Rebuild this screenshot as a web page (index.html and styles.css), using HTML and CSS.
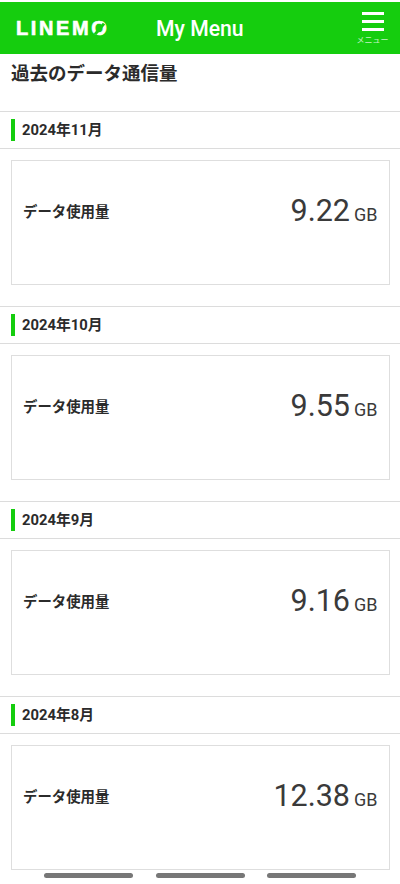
FILE: index.html
```html
<!DOCTYPE html>
<html>
<head>
  <title>My Menu</title>
  <link rel="stylesheet" href="styles.css">
</head>
<body>
  <div class="header">
    <div class="logo">LINEM<span class="logo-o">O</span></div>
    <div class="header-title">My Menu</div>
    <div class="menu">
      <div class="menu-icon"><span></span><span></span><span></span></div>
      <div class="menu-label">メニュー</div>
    </div>
  </div>

  <h1 class="title">過去のデータ通信量</h1>

  <div class="month"><span class="month-name">2024年11月</span></div>
  <div class="card">
    <div class="label">データ使用量</div>
    <div class="usage"><span class="amount">9.22</span><span class="unit">GB</span></div>
  </div>

  <div class="month"><span class="month-name">2024年10月</span></div>
  <div class="card">
    <div class="label">データ使用量</div>
    <div class="usage"><span class="amount">9.55</span><span class="unit">GB</span></div>
  </div>

  <div class="month"><span class="month-name">2024年9月</span></div>
  <div class="card">
    <div class="label">データ使用量</div>
    <div class="usage"><span class="amount">9.16</span><span class="unit">GB</span></div>
  </div>

  <div class="month"><span class="month-name">2024年8月</span></div>
  <div class="card">
    <div class="label">データ使用量</div>
    <div class="usage"><span class="amount">12.38</span><span class="unit">GB</span></div>
  </div>

  <div class="tabs">
    <span class="tab"></span>
    <span class="tab"></span>
    <span class="tab"></span>
  </div>
</body>
</html>
```

FILE: styles.css
```css
html {
  height: 100%;
  overflow: hidden;
}

body {
  margin: 0;
  padding-top: 2px;
  height: 882px;
  overflow: hidden;
  position: relative;
  font-family: Roboto, "Noto Sans CJK JP", sans-serif;
  background-color: #fff;
  color: #2b2b2b;
}

.header {
  display: flex;
  align-items: center;
  height: 52px;
  padding: 0 11px 0 16px;
  background-color: #15cd0e;
  color: #fff;
}

.logo {
  width: 140px;
  font-family: "Liberation Sans", sans-serif;
  font-size: 20px;
  font-weight: 700;
  letter-spacing: 2.6px;
  -webkit-text-stroke: 0.6px #fff;
}

.logo-o {
  position: relative;
  display: inline-block;
}

.logo-o::after {
  content: "";
  position: absolute;
  left: 7px;
  top: 5px;
  width: 3px;
  height: 14px;
  background-color: #15cd0e;
  transform: rotate(40deg);
}

.header-title {
  flex: 1;
  font-size: 21.2px;
  font-weight: 500;
}

.menu {
  display: flex;
  flex-direction: column;
  align-items: center;
  width: 33px;
  padding-top: 3px;
}

.menu-icon {
  display: flex;
  flex-direction: column;
  gap: 5px;
  width: 22px;
}

.menu-icon span {
  height: 3px;
  background-color: #fff;
}

.menu-label {
  margin-top: 4px;
  font-size: 8px;
  line-height: 12px;
  white-space: nowrap;
  opacity: 0.75;
}

.title {
  margin: 0;
  height: 57px;
  padding: 7px 11px 0;
  box-sizing: border-box;
  font-size: 18.5px;
  line-height: 26px;
  font-weight: 700;
}

.month {
  display: flex;
  align-items: center;
  height: 36px;
  padding: 0 11px;
  border-top: 1px solid #dcdcdc;
  border-bottom: 1px solid #dcdcdc;
}

.month-name {
  height: 22px;
  line-height: 22px;
  padding-left: 7px;
  border-left: 4px solid #15cd0e;
  font-size: 14.8px;
  font-weight: 700;
}

.card {
  display: flex;
  justify-content: space-between;
  align-items: flex-start;
  height: 123px;
  margin: 11px 10.5px 21px 11px;
  padding: 0 11px;
  border: 1px solid #dedede;
}

.label {
  margin-top: 42px;
  font-size: 14.4px;
  line-height: 20px;
  font-weight: 700;
}

.usage {
  margin-top: 30px;
  line-height: 40px;
  color: #3a3a3a;
}

.amount {
  font-size: 30.5px;
  font-weight: 400;
}

.unit {
  margin-left: 4px;
  font-size: 18px;
  font-weight: 400;
}

.tabs {
  position: absolute;
  left: 44px;
  top: 873px;
  display: flex;
  gap: 22.5px;
}

.tab {
  width: 89px;
  height: 5px;
  border-radius: 3px;
  background-color: #777;
}
```
